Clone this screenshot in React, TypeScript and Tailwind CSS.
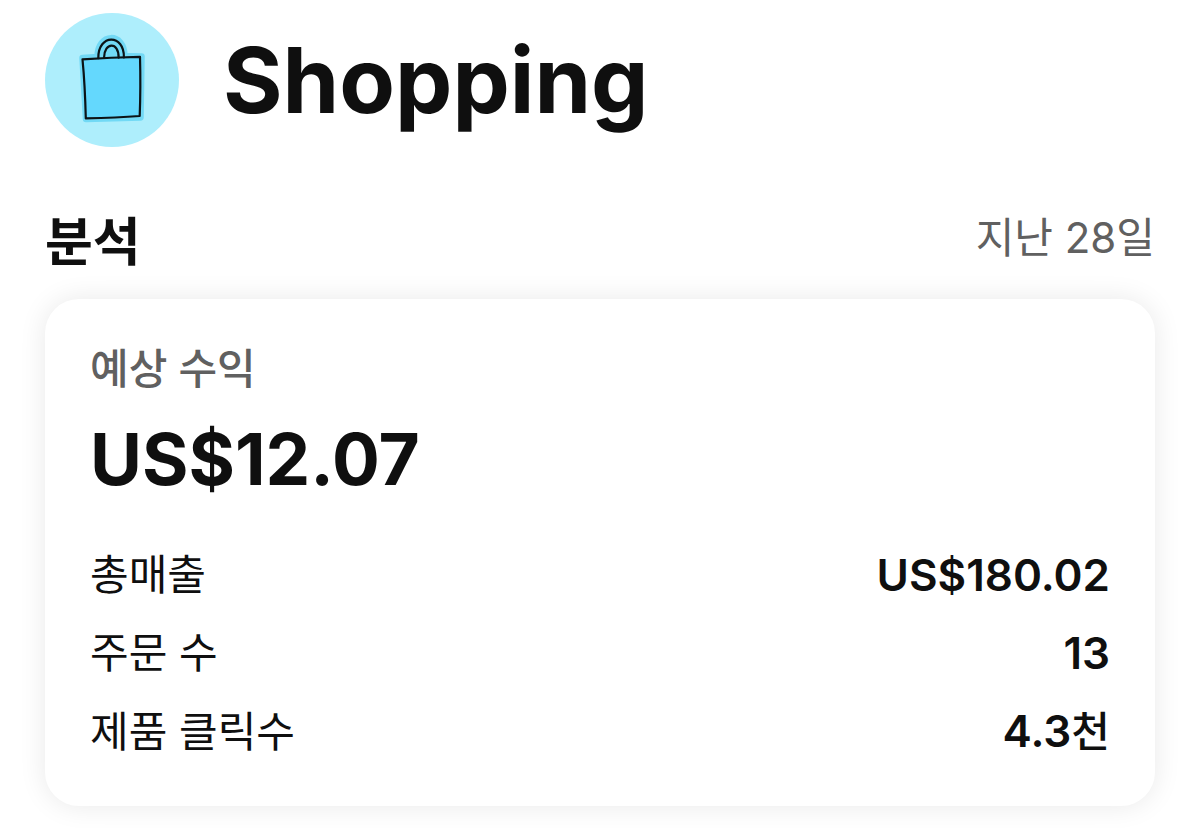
const STATS = [
  { label: '총매출', value: 'US$180.02' },
  { label: '주문 수', value: '13' },
  { label: '제품 클릭수', value: '4.3', unit: '천' },
]

function ShoppingIcon() {
  return (
    <svg viewBox="0 0 134 134" className="h-[134px] w-[134px] shrink-0" aria-hidden="true">
      <circle cx="67" cy="67" r="67" fill="#aeeefc" />
      {/* halo around the bag */}
      <path
        d="M37.5 45L52.5 44C52.5 19 79.5 19 79.5 43L96.5 43.5L95.5 104.5L41 106Z"
        fill="#72d9f5"
        stroke="#72d9f5"
        strokeWidth="6.5"
        strokeLinejoin="round"
      />
      <path d="M37.5 46L95 43.8L94.7 103L40.7 105.3Z" fill="#64d8fd" />
      <g fill="none" stroke="#0b1316" strokeWidth="2.2" strokeLinecap="round" strokeLinejoin="round">
        <path d="M37.5 46.3Q66 44.3 95 43.8Q95.8 75 94.7 103Q72 104.6 40.8 105.4Q40 72 37.5 46.3" />
        <path d="M53.3 45.2C53 20.5 79.5 20.5 78.9 44.5" />
        <path d="M59 45C59.2 28.5 74 28.5 73.6 44.6" />
      </g>
    </svg>
  )
}

export default function App() {
  return (
    <main className="min-h-screen bg-white px-[45px] pt-[13px] pb-6 font-[Inter,'Noto_Sans_CJK_KR',sans-serif] text-[#0f0f0f]">
      <header className="flex items-center gap-11">
        <ShoppingIcon />
        <h1 className="text-[91px] leading-[132px] font-bold">Shopping</h1>
      </header>

      <section className="mt-16">
        <div className="flex items-start justify-between">
          <h2 className="text-[52px] leading-[64px] font-bold">분석</h2>
          <p className="text-[42px] leading-[54px] text-[#606060]">지난 28일</p>
        </div>

        <div className="mt-6 rounded-[34px] bg-white px-[45px] pt-[38px] pb-[35px] shadow-[0_0_28px_rgba(0,0,0,0.09)]">
          <h3 className="text-[42px] leading-[64px] font-medium text-[#606060]">예상 수익</h3>
          <p className="mt-[14px] text-[71px] leading-[88px] font-bold">US$12.07</p>
          <dl className="mt-[33px]">
            {STATS.map((stat) => (
              <div key={stat.label} className="flex items-center justify-between leading-[78px]">
                <dt className="text-[42px]">{stat.label}</dt>
                <dd className="text-[44px] font-semibold">
                  {stat.value}
                  {stat.unit && <span className="text-[42px] font-medium">{stat.unit}</span>}
                </dd>
              </div>
            ))}
          </dl>
        </div>
      </section>
    </main>
  )
}
